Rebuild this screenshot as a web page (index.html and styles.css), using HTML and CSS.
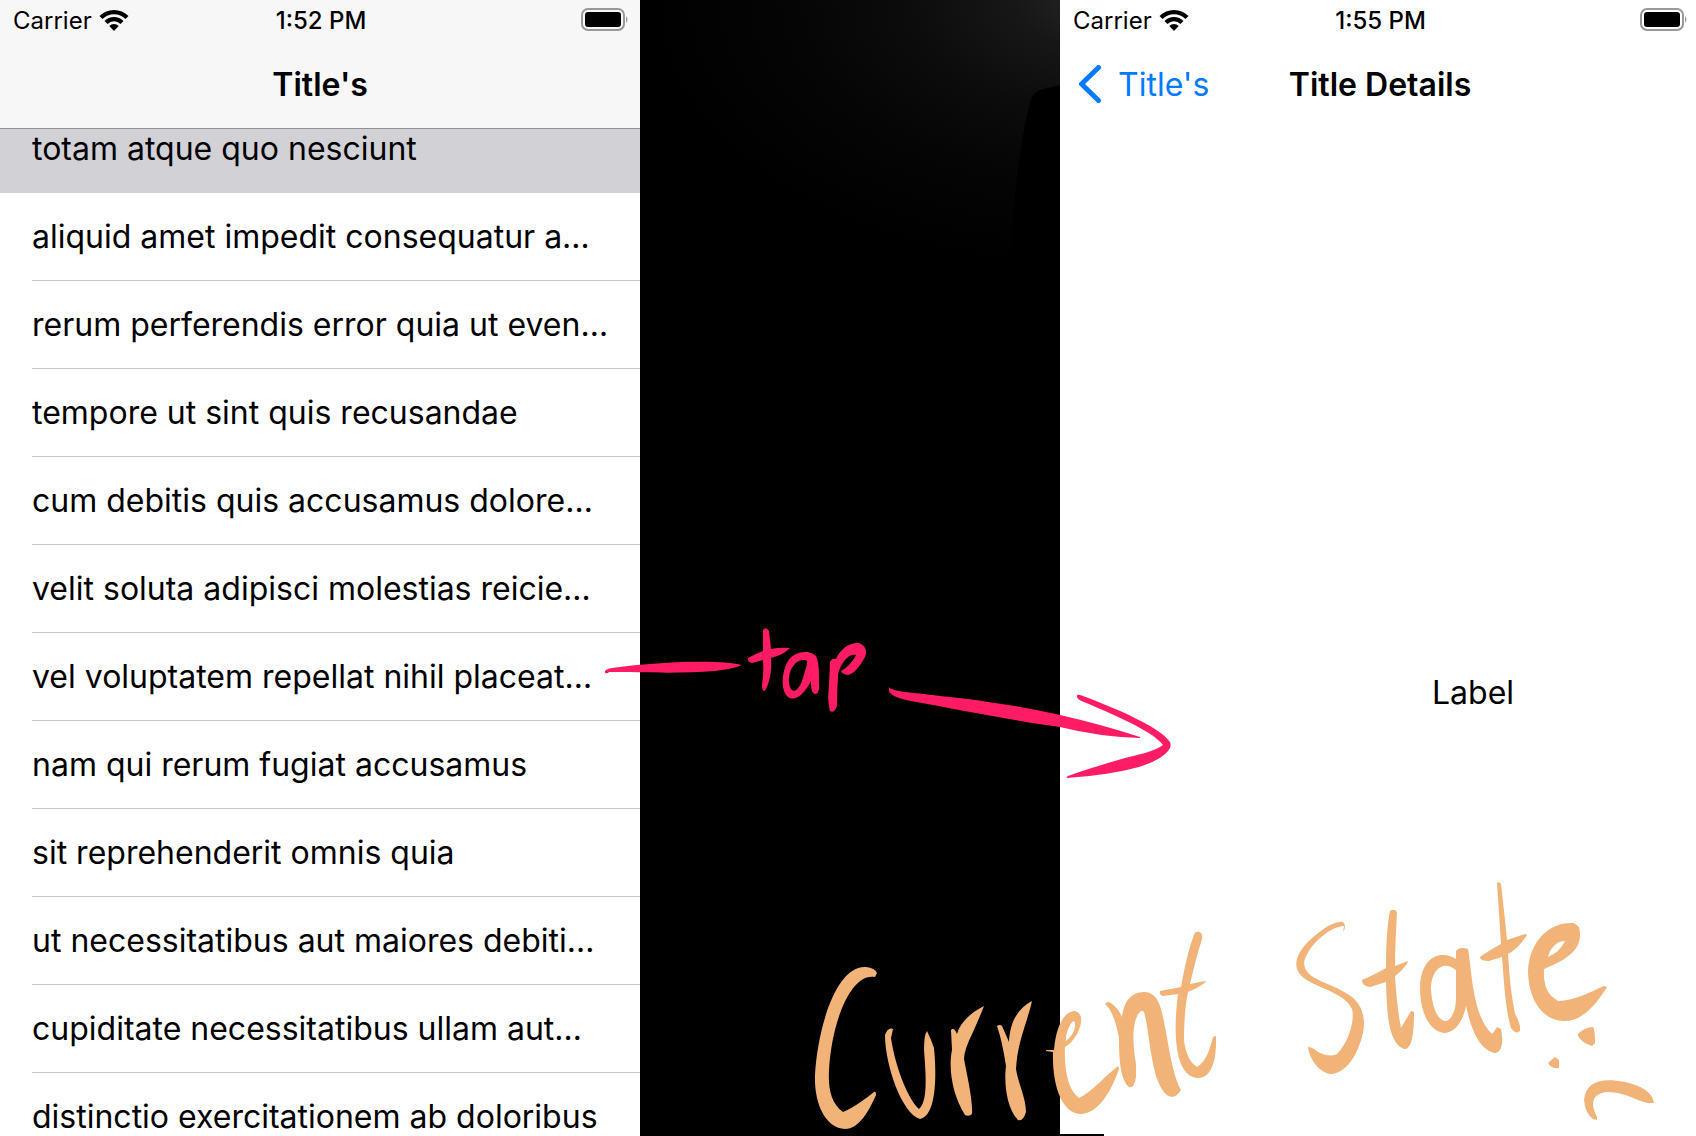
FILE: index.html
```html
<!DOCTYPE html>
<html lang="en">
<head>
<meta charset="utf-8">
<title>Current state</title>
<link rel="stylesheet" href="styles.css">
</head>
<body>
<main class="board">
  <section class="phone">
    <header class="bar bar-filled">
      <div class="status">
        <span class="carrier">Carrier
          <svg class="wifi" viewBox="0 0 30 22" aria-hidden="true"><path d="M0.500 7A20.500 20.500 0 0 1 29.500 7L26.500 10A16.300 16.300 0 0 0 3.500 10ZM5.500 12A13.500 13.500 0 0 1 24.500 12L21.500 15A9.300 9.300 0 0 0 8.500 15ZM10.300 17A6.700 6.700 0 0 1 19.700 17L15 22Z"/></svg>
        </span>
        <time class="clock">1:52 PM</time>
        <svg class="battery" viewBox="0 0 48 24" aria-hidden="true"><rect class="shell" x="1" y="1" width="42" height="21" rx="6"/><rect x="4" y="4" width="36" height="15" rx="3"/><path class="tip" d="M45 8q3 3.500 0 7z"/></svg>
      </div>
      <nav class="nav"><span></span><h1 class="title">Title's</h1><span></span></nav>
    </header>
    <ul class="list">
      <li><button class="row selected">totam atque quo nesciunt</button></li>
      <li><button class="row">aliquid amet impedit consequatur a…</button></li>
      <li><button class="row">rerum perferendis error quia ut even…</button></li>
      <li><button class="row">tempore ut sint quis recusandae</button></li>
      <li><button class="row">cum debitis quis accusamus dolore…</button></li>
      <li><button class="row">velit soluta adipisci molestias reicie…</button></li>
      <li><button class="row">vel voluptatem repellat nihil placeat…</button></li>
      <li><button class="row">nam qui rerum fugiat accusamus</button></li>
      <li><button class="row">sit reprehenderit omnis quia</button></li>
      <li><button class="row">ut necessitatibus aut maiores debiti…</button></li>
      <li><button class="row">cupiditate necessitatibus ullam aut…</button></li>
      <li><button class="row">distinctio exercitationem ab doloribus</button></li>
    </ul>
  </section>

  <div class="gap">
    <svg class="shade" viewBox="0 0 420 300" aria-hidden="true">
      <path d="M420 85L400 90Q393 92 390 102Q376 160 372 240V300H420Z"/>
    </svg>
  </div>

  <section class="phone">
    <header class="bar">
      <div class="status status-detail">
        <span class="carrier">Carrier
          <svg class="wifi" viewBox="0 0 30 22" aria-hidden="true"><path d="M0.500 7A20.500 20.500 0 0 1 29.500 7L26.500 10A16.300 16.300 0 0 0 3.500 10ZM5.500 12A13.500 13.500 0 0 1 24.500 12L21.500 15A9.300 9.300 0 0 0 8.500 15ZM10.300 17A6.700 6.700 0 0 1 19.700 17L15 22Z"/></svg>
        </span>
        <time class="clock">1:55 PM</time>
        <svg class="battery" viewBox="0 0 48 24" aria-hidden="true"><rect class="shell" x="1" y="1" width="42" height="21" rx="6"/><rect x="4" y="4" width="36" height="15" rx="3"/><path class="tip" d="M45 8q3 3.500 0 7z"/></svg>
      </div>
      <nav class="nav nav-detail">
        <a class="back" href="#"><svg class="chevron" viewBox="0 0 24 38" aria-hidden="true"><path d="M20.500 2.500L3.500 19L20.500 35.500"/></svg>Title's</a>
        <h1 class="title">Title Details</h1>
        <span></span>
      </nav>
    </header>
    <div class="detail"><p class="label">Label</p></div>
  </section>

  <svg class="ink" viewBox="0 0 1696 1136" role="img" aria-label="Tap leads to the current state">
    <path d="M1060 1134H1104V1136H1060Z"/>
    <g class="pink">
      <path d="M605 671Q606 668 620 667C650 663 690 661 715 662Q736 663 741 665Q738 668 715 671C680 674 640 672 609 672Q608 674 605 673Z"/>
      <path d="M763 630Q766 626 769 631L771 649Q780 647 790 648Q785 654 771 658C772 670 770 682 765 691Q762 691 762 685Q764 672 763 660L752 663Q747 662 748 658Q755 654 763 651Z"/>
      <path fill-rule="evenodd" d="M813 654C806 650 794 652 788 661C782 671 780 690 788 697C794 701 802 698 811 681C811 690 812 694 816 694Q820 692 819 682C819 672 819 662 816 656ZM804 660C810 659 806 667 802 681C798 691 793 694 790 687C786 674 794 659 804 660Z"/>
      <path d="M830 662Q832 658 836 659C840 649 850 642 859 643C865 645 868 651 865 657C860 666 854 674 848 675Q842 674 841 671C847 668 854 660 856 655C847 653 838 668 838 677Q837 695 837 706Q834 714 830 711Q827 700 829 685Z"/>
      <path d="M889 687C893 692 910 692 940 696C980 700 1020 706 1060 715Q1100 724 1140 737L1140 738Q1100 737 1060 727C1015 721 960 710 906 700Q890 696 889 691Z"/>
      <path d="M1077 695Q1078 694 1083 696C1115 708 1160 727 1170 742Q1172 747 1168 751C1153 769 1105 775 1067 778Q1066 777 1068 776C1090 768 1120 759 1145 753Q1158 749 1163 745C1153 731 1112 714 1084 702Q1078 700 1077 697Z"/>
    </g>
    <g class="orange">
      <path d="M877 973L875 977C852 972 832 1019 829 1070C828 1089 831 1103 843 1112C855 1107 865 1099 874 1092Q876 1091 876 1095C869 1111 859 1129 845 1129C825 1128 814 1103 815 1075C818 1025 837 965 866 967Q875 968 877 973Z"/>
      <path d="M893 1029L891 1038C895 1065 907 1098 919 1109C928 1102 926 1075 924 1050Q924 1035 927 1031Q931 1039 934 1048C937 1078 936 1116 920 1119C902 1114 885 1065 885 1035Q888 1027 893 1029Z"/>
      <path d="M951 1030Q954 1027 957 1034C960 1023 970 1013 984 1006Q981 1014 973 1032Q964 1050 964 1059C967 1075 973 1101 972 1114Q969 1117 965 1115C953 1096 948 1070 952 1050Z"/>
      <path d="M997 1026Q1000 1024 1002 1026L1009 1042C1010 1020 1019 1008 1032 1001C1028 1020 1017 1043 1016 1069C1018 1083 1026 1098 1026 1112Q1023 1122 1018 1120C1006 1108 1004 1081 1006 1066Q1002 1040 997 1026Z"/>
      <path fill-rule="evenodd" d="M1046 1050H1054C1056 1026 1064 1012 1074 1011C1083 1012 1083 1023 1077 1034Q1072 1043 1065 1047C1064 1073 1069 1091 1079 1098C1093 1091 1107 1074 1118 1066L1119 1069C1111 1092 1098 1114 1080 1114C1062 1113 1052 1086 1053 1052L1046 1051ZM1066 1041C1074 1035 1077 1025 1074 1021C1070 1022 1065 1035 1066 1041Z"/>
      <path d="M1105 1004Q1108 1000 1112 1004Q1118 1008 1122 1017C1124 1000 1132 992 1145 992C1160 993 1162 1012 1166 1032C1171 1060 1174 1077 1181 1090C1173 1103 1163 1097 1156 1076C1149 1050 1149 1030 1144 1012Q1142 1009 1139 1013C1131 1024 1133 1046 1136 1064V1077Q1134 1089 1129 1087C1121 1080 1119 1063 1119 1038C1116 1023 1113 1013 1107 1006Z"/>
      <path d="M1194 935Q1195 931 1200 932Q1203 934 1202 939Q1196 958 1190 984L1205 981L1206 982Q1198 988 1188 992C1184 1010 1184 1036 1184 1041Q1187 1061 1197 1067C1207 1061 1210 1048 1213 1037L1216 1036C1217 1061 1211 1078 1198 1078C1177 1077 1172 1041 1178 994L1163 996Q1159 995 1160 991L1181 987Q1187 953 1194 935Z"/>
      <path d="M1343 932L1344 926C1330 926 1306 947 1304 963C1305 980 1328 981 1349 995C1362 1003 1366 1018 1363 1033C1357 1058 1345 1073 1331 1074C1319 1073 1309 1058 1308 1047Q1312 1047 1318 1052Q1330 1058 1337 1054C1349 1042 1355 1020 1352 1009C1345 993 1317 988 1304 978C1293 969 1295 959 1302 949C1312 936 1333 920 1343 922Q1347 926 1343 932Z"/>
      <path d="M1390 911Q1394 908 1397 912C1396 930 1395 949 1395 966L1408 961L1407 964Q1402 971 1395 976Q1397 1008 1401 1028L1411 1011L1414 1012C1414 1033 1412 1050 1404 1049C1389 1043 1387 1018 1386 982L1370 987Q1362 986 1362 980Q1376 974 1386 968Q1386 930 1390 911Z"/>
      <path fill-rule="evenodd" d="M1456 959V951Q1460 946 1468 949C1472 970 1472 1015 1492 1034Q1496 1029 1497 1027L1501 1029C1504 1045 1501 1053 1494 1053C1478 1048 1471 1028 1466 1006C1463 1022 1454 1033 1444 1033C1429 1031 1420 1012 1420 987C1421 957 1440 949 1456 959ZM1456 970C1443 959 1431 970 1431 989C1432 1008 1438 1022 1447 1021C1454 1017 1456 1007 1456 997Z"/>
      <path d="M1497 883Q1499 881 1501 884Q1504 910 1507 940L1525 934L1527 935Q1518 949 1508 954Q1510 990 1515 1014Q1521 1024 1520 1031Q1516 1035 1511 1028C1505 1008 1504 980 1502 957L1489 961Q1480 961 1480 957Q1488 951 1501 944Z"/>
      <path fill-rule="evenodd" d="M1544 969C1543 990 1550 996 1558 1001C1575 1001 1592 991 1604 986L1607 987C1594 1008 1580 1022 1563 1021C1541 1020 1528 997 1528 970C1530 940 1550 922 1573 923Q1580 925 1580 933C1581 952 1563 961 1544 969ZM1548 957Q1560 952 1565 941C1557 940 1549 950 1548 957Z"/>
      <path d="M1578 1034Q1585 1027 1593 1027Q1595 1030 1595 1043L1592 1046Q1582 1043 1578 1036Z"/>
      <path d="M1548 1063L1555 1057L1559 1060V1068Q1551 1069 1548 1063Z"/>
      <path d="M1593 1119L1597 1120V1117C1589 1101 1594 1094 1606 1092C1623 1091 1637 1101 1648 1103H1654C1652 1091 1641 1086 1625 1082C1600 1077 1586 1082 1584 1100Q1585 1113 1593 1119Z"/>
    </g>
  </svg>
</main>
</body>
</html>
```
FILE: styles.css
```css
* { box-sizing: border-box; }
body { margin: 0; background: #fff; color: #000; font-family: Inter, "Liberation Sans", sans-serif; }

.board { position: relative; display: grid; grid-template-columns: 640fr 420fr 636fr; height: 100vh; overflow: hidden; }
.phone { display: flex; flex-direction: column; min-width: 0; min-height: 0; overflow: hidden; background: #fff; }

.bar { position: relative; z-index: 1; flex: none; height: 129px; }
.bar-filled { background: #f7f7f7; border-bottom: 1px solid #919195; }
.status { display: grid; grid-template-columns: 1fr auto 1fr; align-items: center; height: 40px; padding: 0 11px 0 13px; font-size: 24px; }
.status-detail { padding-right: 8px; }
.carrier { display: flex; align-items: center; gap: 7px; }
.wifi { width: 30px; height: 22px; }
.clock { font-weight: 500; }
.battery { width: 48px; height: 24px; justify-self: end; }
.shell { fill: none; stroke: #999; stroke-width: 2px; }
.tip { fill: #999; }

.nav { display: grid; grid-template-columns: 1fr auto 1fr; align-items: center; height: 88px; }
.nav-detail { padding-left: 18px; padding-right: 14px; }
.title { margin: 0; font-size: 32px; font-weight: 600; }
.back { display: flex; align-items: center; gap: 16px; color: #007aff; font-size: 32px; text-decoration: none; }
.chevron { width: 24px; height: 38px; fill: none; stroke: #007aff; stroke-width: 5px; stroke-linecap: round; stroke-linejoin: round; }

/* The list is scrolled partway under the navigation bar. */
.list { flex: 1; margin: -24px 0 0; padding: 0; min-height: 0; overflow: hidden; list-style: none; }
.row { position: relative; display: block; width: 100%; height: 88px; padding: 0 0 0 32px; border: 0; background: #fff; color: #000; font: 32px/88px Inter, "Liberation Sans", sans-serif; text-align: left; white-space: nowrap; }
.row::after { content: ""; position: absolute; left: 32px; right: 0; bottom: 0; height: 1px; background: #c6c6c8; }
.selected { background: #d1d1d6; }
.selected::after { display: none; }

.gap { background: radial-gradient(ellipse 440px 270px at 106% 0, #242424 0%, #171717 16%, #0c0c0c 40%, #050505 66%, #000 100%) #000; }
.shade { display: block; width: 100%; }

.detail { flex: 1; display: flex; align-items: center; justify-content: center; padding: 120px 0 0 190px; }
.label { margin: 0; font-size: 32px; }

.ink { position: absolute; inset: 0; width: 100%; height: 100%; pointer-events: none; }
.pink { fill: #ff1c65; }
.orange { fill: #f2b378; }
```
